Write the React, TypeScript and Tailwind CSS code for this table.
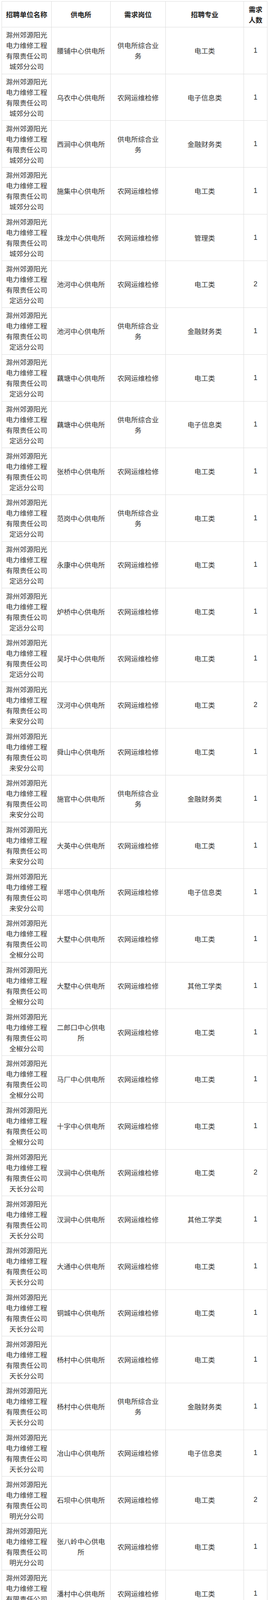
import React from "react";

type Row = [string, string, string, string, string];

const rows: Row[] = [
  ["城郊", "腰铺中心供电所", "供电所综合业务", "电工类", "1"],
  ["城郊", "乌衣中心供电所", "农网运维检修", "电子信息类", "1"],
  ["城郊", "西涧中心供电所", "供电所综合业务", "金融财务类", "1"],
  ["城郊", "施集中心供电所", "农网运维检修", "电工类", "1"],
  ["城郊", "珠龙中心供电所", "农网运维检修", "管理类", "1"],
  ["定远", "池河中心供电所", "农网运维检修", "电工类", "2"],
  ["定远", "池河中心供电所", "供电所综合业务", "金融财务类", "1"],
  ["定远", "藕塘中心供电所", "农网运维检修", "电工类", "1"],
  ["定远", "藕塘中心供电所", "供电所综合业务", "电子信息类", "1"],
  ["定远", "张桥中心供电所", "农网运维检修", "电工类", "1"],
  ["定远", "范岗中心供电所", "供电所综合业务", "电工类", "1"],
  ["定远", "永康中心供电所", "农网运维检修", "电工类", "1"],
  ["定远", "炉桥中心供电所", "农网运维检修", "电工类", "1"],
  ["定远", "吴圩中心供电所", "农网运维检修", "电工类", "1"],
  ["来安", "汊河中心供电所", "农网运维检修", "电工类", "2"],
  ["来安", "舜山中心供电所", "农网运维检修", "电工类", "1"],
  ["来安", "施官中心供电所", "供电所综合业务", "金融财务类", "1"],
  ["来安", "大英中心供电所", "农网运维检修", "电工类", "1"],
  ["来安", "半塔中心供电所", "农网运维检修", "电子信息类", "1"],
  ["全椒", "大墅中心供电所", "农网运维检修", "电工类", "1"],
  ["全椒", "大墅中心供电所", "农网运维检修", "其他工学类", "1"],
  ["全椒", "二郎口中心供电所", "农网运维检修", "电工类", "1"],
  ["全椒", "马厂中心供电所", "农网运维检修", "电工类", "1"],
  ["全椒", "十字中心供电所", "农网运维检修", "电工类", "1"],
  ["天长", "汊涧中心供电所", "农网运维检修", "电工类", "2"],
  ["天长", "汊涧中心供电所", "农网运维检修", "其他工学类", "1"],
  ["天长", "大通中心供电所", "农网运维检修", "电工类", "1"],
  ["天长", "铜城中心供电所", "农网运维检修", "电工类", "1"],
  ["天长", "杨村中心供电所", "农网运维检修", "电工类", "1"],
  ["天长", "杨村中心供电所", "供电所综合业务", "金融财务类", "1"],
  ["天长", "冶山中心供电所", "农网运维检修", "电子信息类", "1"],
  ["明光", "石坝中心供电所", "农网运维检修", "电工类", "2"],
  ["明光", "张八岭中心供电所", "农网运维检修", "电工类", "1"],
  ["明光", "潘村中心供电所", "农网运维检修", "电工类", "1"],
  ["明光", "潘村中心供电所", "农网运维检修", "电子信息类", "1"],
  ["明光", "桥头中心供电所", "农网运维检修", "电工类", "1"],
  ["明光", "桥头中心供电所", "农网运维检修", "其他工学类", "1"],
];

const cell =
  "border border-[#dcdcdc] px-[10px] py-0 text-center align-middle break-all";

function Lines({ children }: { children: React.ReactNode }) {
  return <div className="text-[17.6px] leading-[27px]">{children}</div>;
}

export default function App() {
  return (
    <div
      className="bg-white pt-[3px] pl-[4px] text-[17.6px] leading-[27px] text-[#333333]"
      style={{ fontFamily: '"Noto Sans CJK SC", "Liberation Sans", sans-serif' }}
    >
      <table className="table-fixed border-collapse w-[679px]">
        <colgroup>
          <col className="w-[127px]" />
          <col className="w-[151px]" />
          <col className="w-[141px]" />
          <col className="w-[200px]" />
          <col className="w-[60px]" />
        </colgroup>
        <thead>
          <tr className="h-[66px] font-bold text-[#222222]">
            <th className={cell + " font-bold"}><Lines>招聘单位名称</Lines></th>
            <th className={cell + " font-bold"}><Lines>供电所</Lines></th>
            <th className={cell + " font-bold"}><Lines>需求岗位</Lines></th>
            <th className={cell + " font-bold"}><Lines>招聘专业</Lines></th>
            <th className={cell + " font-bold"}><Lines>需求人数</Lines></th>
          </tr>
        </thead>
        <tbody>
          {rows.map((r, i) => (
            <tr key={i} className="h-[119.7px]">
              <td className={cell}><Lines>滁州郊源阳光电力维修工程有限责任公司{r[0]}分公司</Lines></td>
              <td className={cell}><Lines>{r[1]}</Lines></td>
              <td className={cell}><Lines>{r[2]}</Lines></td>
              <td className={cell}><Lines>{r[3]}</Lines></td>
              <td className={cell} style={{ fontFamily: '"Liberation Sans", sans-serif' }}><Lines>{r[4]}</Lines></td>
            </tr>
          ))}
        </tbody>
      </table>
    </div>
  );
}
